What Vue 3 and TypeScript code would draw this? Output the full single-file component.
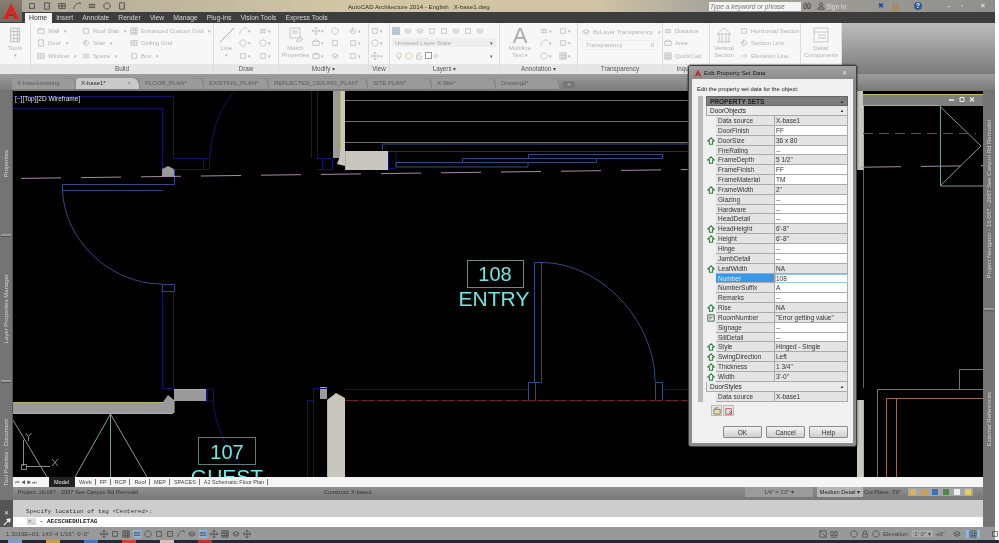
<script setup lang="ts">
const ribbonTabs = ["Home", "Insert", "Annotate", "Render", "View", "Manage", "Plug-ins", "Vision Tools", "Express Tools"];
const docTabs = [
  { name: "X-base1existing", w: 64 },
  { name: "X-base1*", w: 64, active: true },
  { name: "FLOOR_PLAN*", w: 64 },
  { name: "EXISTING_PLAN*", w: 65 },
  { name: "REFLECTED_CEILING_PLAN*", w: 99 },
  { name: "SITE PLAN*", w: 64 },
  { name: "X-Site*", w: 64 },
  { name: "Drawing2*", w: 64 },
];
const layouts = ["Work", "FP", "RCP", "Roof", "MEP", "SPACES", "A2 Schematic Floor Plan"];

const ic: Record<string, string> = {
  box: "M2 2h6v6H2z",
  wall: "M1 3l4-2 4 2v5H1zM1 3h8",
  door: "M2 1h6v8H2zM6 5h1",
  window: "M1 2h8v6H1zM5 2v6M1 5h8",
  grid: "M1 1h8v8H1zM1 4h8M1 7h8M4 1v8M7 1v8",
  stair: "M1 5l4-4 4 4-4 4zM3 3l4 4M5 1l-2 6",
  circle: "M5 1a4 4 0 1 0 .01 0zM5 5h.1",
  arc: "M1 9C1 5 4 1 9 1M9 1v2",
  move: "M5 0v10M0 5h10M5 0L3.5 2M5 0l2 2M5 10L3.5 8M5 10l2-2M0 5l2-1.500M0 5l2 1.500M10 5L8 3.500M10 5L8 6.500",
  layers: "M1 4l4-2 4 2-4 2zM1 6l4 2 4-2",
  lines: "M1 3h8M1 5h8M1 7h8",
  bulb: "M5 1a3 3 0 0 0-2 5v1h4V6a3 3 0 0 0-2-5zM4 9h2",
  house: "M5 1L1 5h2v4h4V5h2z",
};
const drawBtns = ["arc", "lines", "circle", "circle", "box", "box"];
const modifyBtns = ["move", "circle", "stair", "wall", "box", "box", "wall", "layers", "box"];
const layerTop = ["grid", "layers", "layers", "box", "box", "layers", "box", "layers"];
const annoBtns = ["lines", "box", "arc", "box", "circle", "grid"];
const statusLeft = ["move", "box", "grid", "lines", "circle", "box", "box", "arc", "layers", "lines", "move", "grid", "layers", "move"];

const rows = [
  ["Data source", "X-base1", 0],
  ["DoorFinish", "FF", 1],
  ["DoorSize", "36 x 80", 2],
  ["FireRating", "--", 1],
  ["FrameDepth", "5 1/2\"", 2],
  ["FrameFinish", "FF", 1],
  ["FrameMaterial", "TM", 1],
  ["FrameWidth", "2\"", 2],
  ["Glazing", "--", 1],
  ["Hardware", "--", 1],
  ["HeadDetail", "--", 1],
  ["HeadHeight", "6'-8\"", 2],
  ["Height", "6'-8\"", 2],
  ["Hinge", "--", 1],
  ["JambDetail", "--", 1],
  ["LeafWidth", "NA", 2],
  ["Number", "108", 3],
  ["NumberSuffix", "A", 1],
  ["Remarks", "--", 1],
  ["Rise", "NA", 2],
  ["RoomNumber", "\"Error getting value\"", 4],
  ["Signage", "--", 1],
  ["SillDetail", "--", 1],
  ["Style", "Hinged - Single", 2],
  ["SwingDirection", "Left", 2],
  ["Thickness", "1 3/4\"", 2],
  ["Width", "3'-0\"", 2],
] as [string, string, number][];

// cut plane line in the drawing, 40 on / 20 off, slopes up a little
const cutLine = "M21 178.400L983 165.600";
</script>

<template>
  <div class="app">
    <header class="title">
      <div class="appbtn">
        <svg viewBox="0 0 22 22" width="22" height="22"><path d="M11 3L3 19h5l3-7 3 7h5z" fill="#d8261c" /><path d="M9 15h4" stroke="#7a0f0a" /></svg>
      </div>
      <div class="qat">
        <svg v-for="(k, i) in ['box', 'door', 'window', 'arc', 'lines', 'circle', 'door']" :key="i" class="ic dark" viewBox="0 0 10 10"><path :d="ic[k]" /></svg>
      </div>
      <span class="apptitle">AutoCAD Architecture 2014 - English &nbsp; X-base1.dwg</span>
      <div class="search">Type a keyword or phrase</div>
      <svg class="ic dark" viewBox="0 0 10 10"><path d="M1 8V3l2-2 1 2v5zM9 8V3L7 1 6 3v5zM4 4h2" /></svg>
      <svg class="ic dark user" viewBox="0 0 10 10"><path d="M5 1a2 2 0 1 0 .01 0zM1 9c0-4 8-4 8 0z" /></svg>
      <span class="signin">Sign In</span>
      <span class="x-blue">✖</span>
      <svg class="ic lock" viewBox="0 0 10 10"><path d="M2 5h6v4H2zM3 5V3a2 2 0 0 1 4 0v2" /></svg>
      <span class="help">?</span>
      <div class="winbtns"><span>–</span><span>▫</span><span>✕</span></div>
    </header>

    <nav class="tabs">
      <span v-for="t in ribbonTabs" :key="t" class="rtab" :class="{ on: t === 'Home' }">{{ t }}</span>
    </nav>

    <section class="ribbon">
      <div class="panel">
        <div class="pbody big">
          <svg class="bigic" viewBox="0 0 10 14"><path d="M1 1h8v12H1zM1 4h8M1 7h8M1 10h8M4 1v12M7 1v12" /></svg>
          <span>Tools</span><span class="caret">▾</span>
        </div>
        <div class="ptitle"></div>
      </div>
      <div class="panel">
        <div class="pbody build">
          <span class="item"><svg class="ic" viewBox="0 0 10 10"><path :d="ic.wall" /></svg><i>Wall</i><b>▾</b></span>
          <span class="item"><svg class="ic" viewBox="0 0 10 10"><path :d="ic.box" /></svg><i>Roof Slab</i><b>▾</b></span>
          <span class="item"><svg class="ic" viewBox="0 0 10 10"><path :d="ic.grid" /></svg><i>Enhanced Custom Grid</i><b>▾</b></span>
          <span class="item"><svg class="ic" viewBox="0 0 10 10"><path :d="ic.door" /></svg><i>Door</i><b>▾</b></span>
          <span class="item"><svg class="ic" viewBox="0 0 10 10"><path :d="ic.stair" /></svg><i>Stair</i><b>▾</b></span>
          <span class="item"><svg class="ic" viewBox="0 0 10 10"><path :d="ic.window" /></svg><i>Ceiling Grid</i></span>
          <span class="item"><svg class="ic" viewBox="0 0 10 10"><path :d="ic.window" /></svg><i>Window</i><b>▾</b></span>
          <span class="item"><svg class="ic" viewBox="0 0 10 10"><path :d="ic.lines" /></svg><i>Space</i><b>▾</b></span>
          <span class="item"><svg class="ic" viewBox="0 0 10 10"><path :d="ic.box" /></svg><i>Box</i><b>▾</b></span>
        </div>
        <div class="ptitle">Build</div>
      </div>
      <div class="panel">
        <div class="pbody draw">
          <div class="big line">
            <svg class="bigic" viewBox="0 0 16 16"><path d="M1 15L15 1" /></svg>
            <span>Line</span><span class="caret">▾</span>
          </div>
          <div class="btns two">
            <span v-for="(k, i) in drawBtns" :key="i" class="sbtn"><svg class="ic" viewBox="0 0 10 10"><path :d="ic[k]" /></svg><b>▾</b></span>
          </div>
        </div>
        <div class="ptitle">Draw</div>
      </div>
      <div class="panel">
        <div class="pbody draw">
          <div class="big match">
            <svg class="bigic" viewBox="0 0 16 16"><path d="M2 1h10v10H2zM4 4h6M4 6h6M8 14l5-4 2 2-5 3z" /></svg>
            <span>Match</span><span>Properties</span>
          </div>
          <div class="btns three">
            <span v-for="(k, i) in modifyBtns" :key="i" class="sbtn"><svg class="ic" viewBox="0 0 10 10"><path :d="ic[k]" /></svg><b v-if="i % 3 !== 1">▾</b></span>
          </div>
        </div>
        <div class="ptitle">Modify ▾</div>
      </div>
      <div class="panel">
        <div class="pbody viewp">
          <span class="sbtn" v-for="k in ['box', 'circle', 'move']" :key="k"><svg class="ic" viewBox="0 0 10 10"><path :d="ic[k]" /></svg><b>▾</b></span>
        </div>
        <div class="ptitle">View</div>
      </div>
      <div class="panel">
        <div class="pbody layers">
          <div class="lrow">
            <svg v-for="(k, i) in layerTop" :key="i" class="ic" :class="{ sel: i === 0 }" viewBox="0 0 10 10"><path :d="ic[k]" /></svg>
          </div>
          <div class="select"><span>Unsaved Layer State</span><b>▾</b></div>
          <div class="select plain">
            <svg class="ic yl" viewBox="0 0 10 10"><path :d="ic.bulb" /></svg>
            <svg class="ic yl" viewBox="0 0 10 10"><path :d="ic.circle" /></svg>
            <svg class="ic" viewBox="0 0 10 10"><path d="M2 5h6v4H2zM3 5V3a2 2 0 0 1 4 0" /></svg>
            <span class="swatch"></span><span>0</span><b>▾</b>
          </div>
        </div>
        <div class="ptitle">Layers ▾</div>
      </div>
      <div class="panel">
        <div class="pbody draw">
          <div class="big mtext">
            <span class="bigA">A</span>
            <span>Multiline</span><span>Text <b>▾</b></span>
          </div>
          <div class="btns two">
            <span v-for="(k, i) in annoBtns" :key="i" class="sbtn"><svg class="ic" viewBox="0 0 10 10"><path :d="ic[k]" /></svg><b>▾</b></span>
          </div>
        </div>
        <div class="ptitle">Annotation ▾</div>
      </div>
      <div class="panel">
        <div class="pbody transp">
          <span class="item"><svg class="ic" viewBox="0 0 10 10"><path :d="ic.layers" /></svg><i>ByLayer Transparency</i><b>▾</b></span>
          <div class="slider"><span>Transparency</span><span>0</span></div>
        </div>
        <div class="ptitle">Transparency</div>
      </div>
      <div class="panel">
        <div class="pbody inquiry">
          <span class="item"><svg class="ic" viewBox="0 0 10 10"><path :d="ic.lines" /></svg><i>Distance</i></span>
          <span class="item"><svg class="ic" viewBox="0 0 10 10"><path :d="ic.wall" /></svg><i>Area</i></span>
          <span class="item"><svg class="ic" viewBox="0 0 10 10"><path :d="ic.grid" /></svg><i>QuickCalc</i></span>
        </div>
        <div class="ptitle">Inquiry</div>
      </div>
      <div class="panel">
        <div class="pbody draw">
          <div class="big vsec">
            <svg class="bigic" viewBox="0 0 16 16"><path d="M8 1L1 7h14zM3 7v8M13 7v8M1 15h14M6 7v8M10 7v8" /></svg>
            <span>Vertical</span><span>Section</span>
          </div>
          <div class="inquiry sect">
            <span class="item"><svg class="ic" viewBox="0 0 10 10"><path :d="ic.box" /></svg><i>Horizontal Section</i></span>
            <span class="item"><svg class="ic" viewBox="0 0 10 10"><path :d="ic.stair" /></svg><i>Section Line</i></span>
            <span class="item"><svg class="ic" viewBox="0 0 10 10"><path d="M1 5h8M5 2l3 3-3 3" /></svg><i>Elevation Line</i></span>
          </div>
        </div>
        <div class="ptitle"></div>
      </div>
      <div class="panel last">
        <div class="pbody big">
          <svg class="bigic" viewBox="0 0 16 16"><path d="M1 1h14v14H1zM1 5h14M5 8h8M5 11h8" /></svg>
          <span>Detail</span><span>Components</span>
        </div>
        <div class="ptitle"></div>
      </div>
      <div class="ribbon-rest"></div>
    </section>

    <nav class="doctabs">
      <span v-for="t in docTabs" :key="t.name" class="dtab" :class="{ on: t.active }" :style="{ width: t.w + 'px' }">
        {{ t.name }}<em v-if="t.active">×</em>
      </span>
      <span class="newtab">+</span>
    </nav>

    <main class="work">
      <aside class="side left">
        <span class="vt s1">Properties</span>
        <i class="grip g1"></i>
        <span class="vt s2">Layer Properties Manager</span>
        <i class="grip g2"></i>
        <span class="vt s3">Tool Palettes - Document</span>
      </aside>

      <div class="viewport">
        <svg class="plan" viewBox="13 91 970 386" width="970" height="386">
          <!-- walls -->
          <g fill="#9a9a9a">
            <path d="M13 402H163L168 395L174 400V413H13z" />
            <path d="M174 389h33v12h-33zM320 387h7v12h-7z" />
            <path d="M162 177v-8l6-3 6 3v8z" />
            <path d="M333 90h7v68h-7z" />
          </g>
          <g fill="#c9c6be">
            <path d="M340 90h5v61h43v19h-43v-4l-8-2 3-8z" />
            <path d="M327 400l9-7 9 5v79h-18z" />
            <path d="M857 90h6v80h-6zM857 400h6v77h-6z" />
          </g>
          <g fill="none" stroke="#b9b76a" stroke-width="1">
            <path d="M13 402.500H163M174 389.500h33M174 400v13M13 413.500h160" />
            <path d="M327.500 400v77M345.500 151v19" />
            <path d="M340.500 90v60M863.500 90v80M863.500 400v77" />
          </g>

          <!-- dark blue outlines -->
          <g fill="none" stroke="#12126c" stroke-width="1">
            <path d="M13 96.500H173.500V158.500H209.500V169.500H173.500M13 108.500H162.500V169" />
            <path d="M209.500 158C212 128 222 104 235 91" />
            <path d="M203.500 158v11" />
            <path d="M162.500 291v97M173.500 291v97M162 388.500H174M207.500 389v12M213.500 389h-7v12h7z" />
            <path d="M311.500 91v67M317.500 91v67M316 158.500h17M317 169.500h16M322.500 158v11M332.500 158v11" />
            <path d="M307.500 400v77M313.500 388v89M313 388.500h14M307 400.500h7" />
            <path d="M345 389.500H528M662 389.500H690M396 151.500H388.500V168.500H396" />
            <path d="M396 168.500v-17" />
            <path d="M213 400C215 425 226 450 240 464" />
          </g>
          <!-- lighter blue: door swings -->
          <g fill="none" stroke="#2f4c82" stroke-width="1">
            <path d="M62.500 184.500H174.500V169M62.500 190.500H162.500M62.500 184.500V190" />
            <path d="M62.500 190C64 240 110 284 162 284" />
            <path d="M162.500 284.500h12v7h-12z" />
            <path d="M382.500 150v-6H690M528.500 154.500h134v4h-134zM462.500 158.500h134v4h-134zM396 162.500h132v4.500H396z" />
            <path d="M534.500 262.500h7v120h-7zM528.500 382.500h7v18h-7zM655.500 382.500h7v18h-7z" />
            <path d="M541 262.500C600 262.500 655 320 655 382" />
          </g>
          <!-- grey background lines -->
          <g stroke="#6f6f6f" stroke-width="1">
            <path d="M345 100.500H690M345 121.500H690M345 142.500H690" />
          </g>
          <path d="M388 151.500H690" stroke="#6e1414" />
          <path d="M345 400.500H690" stroke="#6e1f2c" stroke-dasharray="14 2" />
          <path d="M690 400.500h167" stroke="#6e1f2c" stroke-dasharray="14 2" />
          <path :d="cutLine" stroke="#a98aa8" stroke-dasharray="40 20" fill="none" />

          <!-- tags -->
          <rect x="467.500" y="260.500" width="56" height="27" fill="#000" stroke="#6f8a85" />
          <text x="495" y="281" class="tag n">108</text>
          <text x="494" y="306" class="tag">ENTRY</text>
          <rect x="198.500" y="437.500" width="57" height="27" fill="none" stroke="#5f7e78" />
          <text x="227" y="459" class="tag n">107</text>
          <text x="227" y="484" class="tag">GUEST</text>

          <!-- section triangle and ucs -->
          <g fill="none" stroke="#7f9c98">
            <path d="M110.500 414V477M110.500 414L75 477M110.500 414L147 477M13 420L47 477" />
            <path d="M939.500 106L981 146L940 186M940.500 106V186H983" />
          </g>
          <g fill="none" stroke="#8c8c8c">
            <path d="M23.500 440V466M26 466.500H50M21.500 464.500h5v5h-5z" />
            <path d="M25.500 433l3 3.500 3-3.500M28.500 436.500V441M52 459l6 7M58 459l-6 7" />
          </g>

          <!-- right side -->
          <path d="M863 133.500H976" stroke="#6e4a3a" stroke-dasharray="10 6" />
          <path d="M863.500 170V388" stroke="#3d7a3d" />
          <g fill="none" stroke="#9a6a4a">
            <path d="M877.500 477V389.500H983M886.500 477V398.500H983M896.500 477V399M959.500 389V369.500H983" />
          </g>

          <!-- floating window title -->
          <path d="M863 91h120v3H863z" fill="#000" />
          <rect x="863" y="94" width="120" height="12" fill="#7f7f7f" />
          <path d="M863 94.500H983M863 105.500H939" stroke="#b9b76a" />
          <g fill="none" stroke="#eee">
            <path d="M949 100h5" stroke-width="1.500" />
            <path d="M960 97.500h4v4h-4z" />
            <path d="M970 97.500l4 4M974 97.500l-4 4" stroke-width="1.200" />
          </g>
          <text x="15" y="101" class="vplabel">[−][Top][2D Wireframe]</text>
        </svg>
      </div>

      <aside class="side right">
        <span class="vt s4">Project Navigator - 16-067 - 2987 See Canyon Rd Remodel</span>
        <i class="grip g3"></i>
        <span class="vt s5">External References</span>
      </aside>

      <!-- floating dialog -->
      <div class="dialog">
        <div class="dlg-title">
          <svg viewBox="0 0 10 10" width="8" height="8"><path d="M5 1L1 9h2.500L5 6l1.500 3H9z" fill="#c8201a" /></svg>
          <span>Edit Property Set Data</span>
          <em>✕</em>
        </div>
        <div class="dlg-body">
          <p class="dlg-hint">Edit the property set data for the object:</p>
          <div class="dlg-main">
            <div class="scroll"></div>
            <div class="sheet">
              <div class="sets">PROPERTY SETS<b>▲</b></div>
              <div class="group">DoorObjects<b>▲</b></div>
              <div v-for="r in rows" :key="r[0]" class="row" :class="{ sel: r[2] === 3, edit: r[2] === 1 || r[2] === 3 }">
                <span class="gut">
                  <svg v-if="r[2] === 2" viewBox="0 0 10 10" width="8" height="8"><path :d="ic.house" fill="none" stroke="#2f7a3a" stroke-width="1.300" /></svg>
                  <svg v-if="r[2] === 4" viewBox="0 0 10 10" width="8" height="8"><path d="M1 1h8v8H1zM3 4h4M3 6h2" fill="none" stroke="#3f6a45" stroke-width="1.200" /></svg>
                </span>
                <span class="nm">{{ r[0] }}</span>
                <span class="vl">{{ r[1] }}</span>
              </div>
              <div class="group">DoorStyles<b>▲</b></div>
              <div class="row">
                <span class="gut"></span><span class="nm">Data source</span><span class="vl">X-base1</span>
              </div>
            </div>
          </div>
          <div class="mini">
            <span><svg viewBox="0 0 10 10" width="8" height="8"><path d="M1 3h8v6H1zM3 3V1h4" fill="#e8d9a8" stroke="#555" stroke-width=".8" /></svg></span>
            <span><svg viewBox="0 0 10 10" width="8" height="8"><path d="M1 2h7v7H1zM5 5l4 4M9 5L5 9" fill="none" stroke="#a33" stroke-width=".9" /></svg></span>
          </div>
          <div class="actions">
            <button>OK</button><button>Cancel</button><button>Help</button>
          </div>
        </div>
      </div>
    </main>

    <section class="lower">
      <div class="lefttool">
        <span class="x">✕</span>
        <svg viewBox="0 0 10 10" width="8" height="8"><path d="M1 9l5-5M5 2l3-1 1 1-1 3z" stroke="#eee" stroke-width="1.400" fill="#eee" /></svg>
      </div>
      <div class="lowermain">
        <div class="layouts">
          <span class="nav">⏮ ◀ ▶ ⏭</span>
          <span class="ltab on">Model</span>
          <span v-for="l in layouts" :key="l" class="ltab">{{ l }}</span>
        </div>
        <div class="projbar">
          <span class="pj">Project: 16-067 - 2987 See Canyon Rd Remodel</span>
          <span class="cons">Construct: X-base1</span>
          <span class="scale">1/4" = 1'0" ▾</span>
          <span class="detail">Medium Detail ▾</span>
          <span class="cut">Cut Plane: 3'6"</span>
          <span class="chips"><i class="c1"></i><i class="c2"></i><i class="c3"></i><i class="c4"></i><i class="c5"></i><i class="c6"></i></span>
        </div>
        <div class="cmd-hist">Specify location of tag &lt;Centered&gt;:</div>
        <div class="cmd-in"><span class="prompt">&gt;_</span> - AECSCHEDULETAG</div>
      </div>
      <div class="lowerside"></div>
    </section>

    <footer class="statusbar">
      <span class="coord">1.3019E+03, 143'-4 1/16", 0'-0"</span>
      <span class="stic">
        <svg v-for="(k, i) in statusLeft" :key="i" class="ic st" :class="{ act: i === 3 || i === 9 }" viewBox="0 0 10 10"><path :d="ic[k]" /></svg>
      </span>
      <span class="stright">
        <svg class="ic st" viewBox="0 0 10 10"><path d="M1 1h8v8H1zM1 1l8 8" /></svg>
        <svg class="ic st" viewBox="0 0 10 10"><path d="M1 2h3v5H1zM6 2h3v5H6zM1 9h8" /></svg>
        <svg class="ic st gap" viewBox="0 0 10 10"><path :d="ic.circle" /></svg>
        <svg class="ic st" viewBox="0 0 10 10"><path d="M2 5h6v4H2zM3 5V3a2 2 0 0 1 4 0v2" /></svg>
        <svg class="ic st" viewBox="0 0 10 10"><path :d="ic.circle" /></svg>
        <span>Elevation:</span><span class="elev">1' 0" ▾</span><span>+0"</span>
        <svg class="ic st lay" viewBox="0 0 10 10"><path :d="ic.layers" /></svg>
        <svg class="ic st act wide" viewBox="0 0 10 10"><path :d="ic.grid" /></svg>
        <svg class="ic st lastic" viewBox="0 0 10 10"><path :d="ic.box" /></svg>
      </span>
    </footer>
    <div class="taskbar"><i class="t1"></i><i class="t2"></i><i class="t3"></i><i class="t4"></i><i class="t5"></i><i class="t6"></i></div>
  </div>
</template>

<style>
html, body { margin: 0; background: #fff; }
</style>

<style scoped>
.app {
  width: 999px;
  height: 543px;
  position: relative;
  overflow: hidden;
  display: flex;
  flex-direction: column;
  font-family: "Liberation Sans", Arial, sans-serif;
  font-size: 6.5px;
  background: #fff;
  color: #222;
  filter: blur(0.3px);
}
.ic { width: 8px; height: 8px; flex: none; fill: none; stroke: #b9b9b9; stroke-width: 0.9; }
.ic.dark { stroke: #333; }
i { font-style: normal; }
b { font-weight: normal; }

/* title bar */
.title {
  height: 12px;
  width: 995px;
  flex: none;
  position: relative;
  display: flex;
  align-items: center;
  background: linear-gradient(90deg, #a9a69b 0, #bdb59c 15%, #d2c6a4 35%, #cfc3a4 60%, #a5a39b 72%, #8f8f8d 100%);
}
.appbtn { width: 22px; height: 22px; align-self: flex-start; background: linear-gradient(#8a8070, #6b6a66); z-index: 2; flex: none; margin-right: 6px; }
.qat { display: flex; gap: 7px; width: 320px; flex: none; }
.apptitle { font-size: 6.15px; width: 361px; flex: none; color: #333; white-space: nowrap; }
.search { width: 91px; height: 9px; line-height: 9px; flex: none; background: #f4f4f4; color: #777; font-style: italic; padding-left: 1px; margin-right: 2px; }
.user { margin-left: 6px; }
.signin { color: #ddd; margin-left: 1px; width: 52px; flex: none; }
.x-blue { color: #22449a; font-size: 7px; width: 13px; flex: none; }
.lock { stroke: #b87a20; width: 9px; height: 9px; margin-right: 14px; }
.help { width: 8px; height: 8px; line-height: 8px; border-radius: 50%; background: #345a92; color: #fff; text-align: center; font-weight: bold; flex: none; }
.winbtns { display: flex; margin-left: 25px; color: #e6e6e6; font-size: 7px; }
.winbtns span { width: 14px; }
.winbtns span:nth-child(2) { width: 19px; }

/* ribbon tabs */
.tabs { height: 11px; width: 995px; flex: none; background: #3d3d3d; display: flex; align-items: flex-end; padding-left: 24.500px; box-sizing: border-box; }
.rtab { color: #d8d8d8; font-size: 6.8px; line-height: 10px; padding: 0 4.500px; white-space: nowrap; }
.rtab.on { background: #f4f4f4; color: #333; }

/* ribbon */
.ribbon { width: 995px; height: 51px; flex: none; display: grid; grid-template-columns: 31px 183px 65px 90px 21px 110px 78px 85px 47px 91px 41px 1fr; }
.panel { display: flex; flex-direction: column; background: #f7f7f7; border-right: 1px solid #ddd; box-sizing: border-box; color: #b4b4b4; min-width: 0; font-size: 6px; }
.pbody { flex: 1; min-height: 0; }
.ptitle { height: 10px; line-height: 10px; text-align: center; background: #e6e6e6; color: #555; white-space: nowrap; font-size: 6.300px; }
.ribbon-rest { background: linear-gradient(#bdbdbd, #7b7b7b); }
.big { display: flex; flex-direction: column; align-items: center; padding-top: 4px; line-height: 7px; box-sizing: border-box; }
.bigic { width: 16px; height: 16px; fill: none; stroke: #bdbdbd; stroke-width: 0.8; margin-bottom: 2px; }
.caret { font-size: 5px; }
.item { display: flex; align-items: center; gap: 3px; white-space: nowrap; }
.item b { font-size: 5px; margin-left: 2px; }
.build { display: grid; grid-template-columns: 45px 48px 1fr; align-content: space-around; padding: 2px 0 2px 6px; }
.draw { display: flex; }
.line { width: 25px; flex: none; }
.line .bigic { stroke: #999; }
.match { width: 33px; flex: none; }
.mtext { width: 40px; flex: none; }
.vsec { width: 28px; flex: none; }
.bigA { font-size: 22px; line-height: 18px; height: 18px; color: #aaa; }
.mtext b { font-size: 5px; }
.btns { display: grid; align-content: space-around; padding: 2px 0; flex: 1; }
.btns.two { grid-template-columns: 1fr 1fr; }
.btns.three { grid-template-columns: 1fr 1fr 1fr; }
.sbtn { display: flex; align-items: center; gap: 1px; }
.sbtn b { font-size: 5px; }
.viewp { display: flex; flex-direction: column; justify-content: space-around; padding: 2px 2px; }
.layers { display: flex; flex-direction: column; justify-content: space-around; padding: 2px 3px 2px 2px; }
.lrow { display: flex; gap: 4px; }
.ic.sel { background: #bcd6ee; }
.ic.yl { stroke: #c9c070; }
.select { display: flex; align-items: center; justify-content: space-between; height: 9px; background: #eee; padding: 0 3px; color: #aaa; gap: 2px; }
.select.plain { background: none; justify-content: flex-start; }
.select.plain b { margin-left: auto; }
.select b { font-size: 5px; color: #555; }
.swatch { width: 7px; height: 7px; border: 1px solid #999; background: #fff; box-sizing: border-box; }
.transp { padding: 5px 4px; display: flex; flex-direction: column; gap: 4px; }
.slider { display: flex; justify-content: space-between; border: 1px solid #eee; padding: 1px 3px; }
.inquiry { display: flex; flex-direction: column; justify-content: space-around; padding: 2px 0 2px 1px; }
.sect { flex: 1; padding-left: 2px; }

/* document tabs */
.doctabs { height: 16px; flex: none; width: 995px; display: flex; align-items: flex-end; box-sizing: border-box; padding: 0 0 1px 12px; background: linear-gradient(#9d9d9d, #7c7c7c); font-size: 6px; }
.dtab { height: 11px; line-height: 11px; box-sizing: border-box; padding-left: 5px; color: #5c5c5c; background: #9a9a9a; border-radius: 3px 8px 0 0; border-right: 1px solid #868686; white-space: nowrap; overflow: hidden; position: relative; }
.dtab.on { background: #c9c9c9; color: #2e2e2e; }
.dtab em { position: absolute; right: 8px; top: 0; font-style: normal; color: #8a8a8a; }
.newtab { width: 12px; height: 7px; line-height: 6px; margin: 0 0 1px 3px; background: #777; color: #ccc; text-align: center; border-radius: 2px; }

/* work area */
.work { height: 387px; flex: none; width: 995px; display: flex; position: relative; background: #777; }
.side { width: 13px; flex: none; background: #747474; position: relative; display: flex; flex-direction: column; border-right: 1px solid #555; box-sizing: border-box; }
.side.right { border: 0; width: 12px; }
.vt { writing-mode: vertical-rl; transform: rotate(180deg); color: #d4d4d4; white-space: nowrap; position: absolute; left: 3px; font-size: 6px; }
.s1 { top: 60px; }
.s2 { top: 184px; }
.s3 { top: 329px; }
.s4 { top: 30px; }
.s5 { top: 302px; }
.grip { position: absolute; left: 1px; right: 1px; height: 3px; background: #9a9a9a; border-bottom: 1px solid #555; box-sizing: border-box; }
.g1 { top: 144px; }
.g2 { top: 290px; }
.g3 { top: 218px; }
.viewport { width: 970px; flex: none; background: #000; margin-top: 1px; }
.plan { display: block; background: #000; }
.tag { font-size: 21px; fill: #6fe6e0; text-anchor: middle; font-family: "Liberation Sans", Arial, sans-serif; }
.tag.n { font-size: 20px; }
.vplabel { font-size: 6.5px; fill: #e6e6e6; font-family: "Liberation Sans", Arial, sans-serif; }

/* dialog */
.dialog { position: absolute; left: 688px; top: -25px; width: 169px; height: 382px; box-sizing: border-box; background: #8c8c8c; border: 1px solid #3e3e3e; border-radius: 3px; padding: 0 3px 3px; display: flex; flex-direction: column; box-shadow: 0 0 2px #000; z-index: 3; }
.dlg-title { height: 13px; flex: none; display: flex; align-items: center; gap: 2px; font-size: 6.200px; color: #222; background: linear-gradient(#a2a2a2, #8c8c8c); margin: 0 -3px; padding-left: 5px; }
.dlg-title em { margin-left: auto; margin-right: 9px; font-style: normal; color: #eee; }
.dlg-body { flex: 1; background: #f0f0f0; padding: 6px 5px 0; display: flex; flex-direction: column; min-height: 0; }
.dlg-hint { margin: 0 0 3px; height: 8px; line-height: 8px; white-space: nowrap; font-size: 5.800px; }
.dlg-main { display: flex; height: 306px; flex: none; }
.scroll { width: 5px; margin: 0 3px 0 1px; background: #bbb; flex: none; }
.sheet { flex: 1; min-width: 0; }
.sets { height: 10px; line-height: 9px; background: #7e7e7e; font-weight: bold; padding-left: 3px; display: flex; justify-content: space-between; color: #222; border: 1px solid #666; box-sizing: border-box; }
.group { height: 10px; line-height: 9px; background: #e9e9e9; padding-left: 3px; display: flex; justify-content: space-between; box-sizing: border-box; border-bottom: 1px solid #aaa; border-left: 1px solid #aaa; border-right: 1px solid #aaa; }
.sets b, .group b { font-size: 4px; margin-right: 3px; }
.row { height: 9.850px; line-height: 9px; display: grid; grid-template-columns: 10px 59px 1fr; box-sizing: border-box; }
.gut { display: flex; align-items: center; justify-content: center; }
.nm { background: #e4e4e4; border: solid #aaa; border-width: 0 1px 1px 0; padding-left: 2px; color: #333; white-space: nowrap; overflow: hidden; }
.vl { background: #e4e4e4; border: solid #aaa; border-width: 0 1px 1px 0; padding-left: 1px; color: #333; white-space: nowrap; overflow: hidden; }
.edit .vl { background: #fff; }
.sel .nm { background: #3a96e6; color: #d9ecff; }
.sel .vl { outline: 1px solid #9cc7ea; outline-offset: -1px; }
.mini { display: flex; gap: 1px; margin: 3px 0 0 14px; }
.mini span { width: 11px; height: 11px; border: 1px solid #bbb; background: #e6e6e6; box-sizing: border-box; display: flex; align-items: center; justify-content: center; }
.actions { display: flex; justify-content: flex-end; gap: 4px; margin-top: 10px; }
.actions button { width: 39px; height: 12px; padding: 0; font: 6.5px "Liberation Sans", Arial, sans-serif; color: #333; background: linear-gradient(#f2f2f2, #cfcfcf); border: 1px solid #8c8c8c; border-radius: 1px; }

/* lower bars */
.lower { height: 50px; width: 995px; flex: none; display: flex; background: #7a7a7a; }
.lefttool { width: 13px; flex: none; display: flex; flex-direction: column; align-items: center; justify-content: flex-end; gap: 2px; padding-bottom: 1px; box-sizing: border-box; color: #eee; font-size: 6px; background: linear-gradient(#777 45%, #555 46%); }
.lowermain { width: 970px; flex: none; display: flex; flex-direction: column; }
.lowerside { flex: 1; background: #747474; }
.layouts { height: 10px; background: #f5f5f5; display: flex; align-items: center; gap: 4px; padding-left: 2px; color: #444; white-space: nowrap; font-size: 5.500px; }
.nav { font-size: 5px; width: 30px; flex: none; color: #555; overflow: hidden; white-space: nowrap; }
.ltab { border-right: 1px solid #777; padding-right: 3px; }
.ltab.on { background: #222; color: #eee; padding: 0 6px 0 5px; height: 10px; line-height: 10px; border: 0; }
.projbar { height: 10px; line-height: 10px; background: linear-gradient(#8f8f8f, #7b7b7b); display: flex; align-items: center; color: #333; white-space: nowrap; padding-left: 5px; font-size: 5.600px; }
.pj { width: 306px; flex: none; }
.cons { width: 421px; flex: none; }
.scale { width: 68px; flex: none; background: #9c9c9c; text-align: center; color: #444; margin-right: 4px; }
.detail { width: 46px; flex: none; background: #b5b5b5; text-align: center; color: #222; }
.cut { width: 45px; flex: none; padding-left: 1px; box-sizing: border-box; }
.chips { display: flex; gap: 5px; background: #a5a5a5; padding: 1px 2px; }
.chips i { width: 6px; height: 6px; display: block; }
.c1 { background: #d8b060; } .c2 { background: #c8a050; } .c3 { background: #3f6fb0; } .c4 { background: #4a8a4a; } .c5 { background: #eee; } .c6 { background: #e0d060; }
.cmd-hist { margin-top: 3px; height: 17px; background: #cdcdcd; font: 6px/24px "Liberation Mono", monospace; color: #333; padding-left: 13px; box-sizing: border-box; overflow: hidden; }
.cmd-in { height: 10px; background: #fff; font: bold 6px/10px "Liberation Mono", monospace; color: #222; padding-left: 14px; }
.prompt { background: #ddd; color: #777; padding: 0 1px; }

.statusbar { height: 13px; width: 995px; flex: none; background: #999; display: flex; align-items: center; color: #444; white-space: nowrap; padding-left: 6px; box-sizing: border-box; font-size: 6px; }
.coord { width: 94px; flex: none; }
.stic { display: flex; gap: 3px; width: 719px; flex: none; }
.ic.st { stroke: #444; }
.ic.act { background: #8fb8df; }
.stright { display: flex; align-items: center; gap: 3px; }
.gap { margin-left: 9px; }
.elev { background: #aaa; padding: 0 2px; }
.lay { margin-left: 5px; }
.ic.wide { width: 14px; margin-left: 2px; }
.lastic { margin-left: 8px; }
.taskbar { height: 3px; flex: none; background: #1f2b3b; display: flex; gap: 24px; padding-left: 8px; }
.taskbar i { width: 14px; height: 3px; display: block; }
.t1 { background: #6fa0d8; } .t2 { background: #c8a040; } .t3 { background: #3a7ac0; } .t4 { background: #d84030; } .t5 { background: #d0c0c0; width: 20px; } .t6 { background: #c03030; }
</style>
